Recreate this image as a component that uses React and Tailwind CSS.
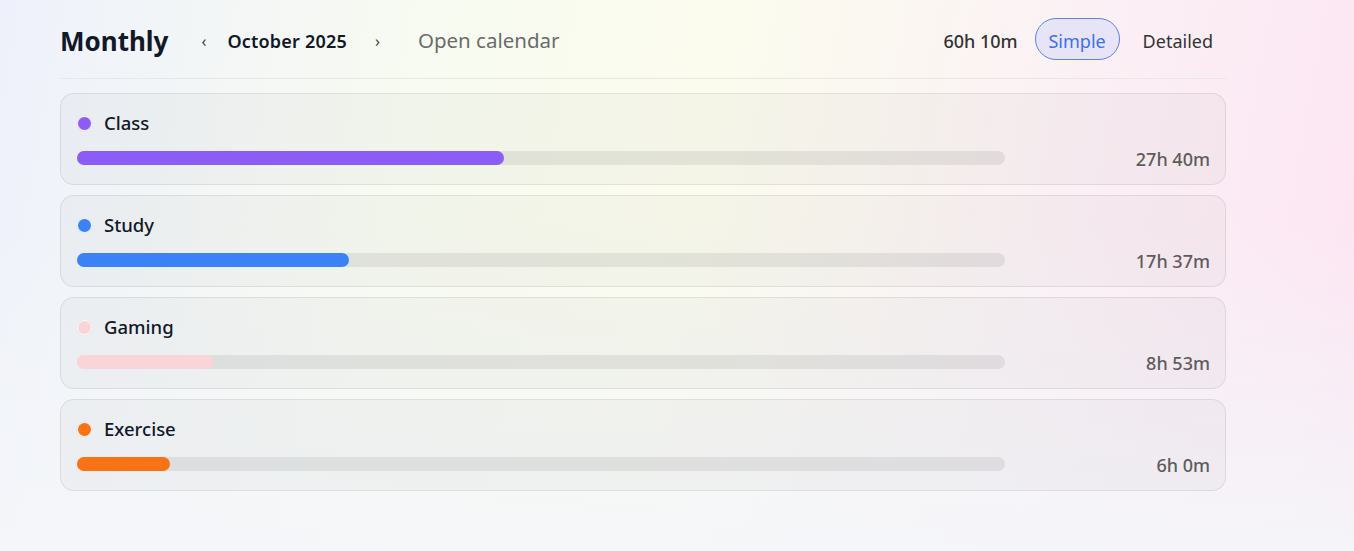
import React from "react";

const items = [
  { name: "Class", time: "27h 40m", mins: 1660, dot: "bg-[#8b5cf6]", bar: "bg-[#8b5cf6]" },
  { name: "Study", time: "17h 37m", mins: 1057, dot: "bg-[#3b82f6]", bar: "bg-[#3b82f6]" },
  { name: "Gaming", time: "8h 53m", mins: 533, dot: "bg-[#f9d4d8]", bar: "bg-[#f9d4d8]" },
  { name: "Exercise", time: "6h 0m", mins: 360, dot: "bg-[#f97316]", bar: "bg-[#f97316]" },
];
const total = 3610;

export default function App() {
  return (
    <div
      className="relative min-h-screen w-full overflow-hidden bg-[linear-gradient(100deg,#eef1fb_0%,#f8fbf1_30%,#fbfcee_50%,#fbf1f5_75%,#fce4f2_100%)]"
      style={{ fontFamily: '"Noto Sans", "Open Sans", sans-serif' }}
    >
      <div className="pointer-events-none absolute inset-0 bg-[linear-gradient(180deg,rgba(255,255,255,0)_0%,rgba(255,255,255,0)_40%,rgba(244,246,250,0.9)_100%)]" />
      <div className="relative w-[1166px] ml-[60px] pt-[18px]">
        <div className="flex items-center h-[42px]">
          <h1 className="pt-[3px] text-[26px] font-bold text-[#111827] leading-none">Monthly</h1>
          <button className="ml-[33px] pt-[3px] text-[16px] text-[#374151] leading-none">‹</button>
          <span className="ml-[21px] pt-[3px] text-[18px] font-semibold text-[#111827] leading-none tracking-[0.2px]">October 2025</span>
          <button className="ml-[28px] pt-[3px] text-[16px] text-[#374151] leading-none">›</button>
          <span className="ml-[38px] pt-[3px] text-[20.5px] text-[#6b6b6b] leading-none">Open calendar</span>
          <div className="ml-auto flex items-center">
            <span className="pt-[3px] text-[18px] font-medium text-[#333] leading-none">60h 10m</span>
            <button className="ml-[17px] pt-[3px] h-[42px] w-[85px] rounded-full border border-[#5b82ee] bg-[#e8e4f7] text-[18px] text-[#3b6ff0] leading-none">Simple</button>
            <span className="ml-[23px] mr-[13px] pt-[3px] text-[18px] text-[#333] leading-none">Detailed</span>
          </div>
        </div>
        <div className="mt-[18px] border-t border-[#e7e7e4]" />
        <div className="mt-[14px] flex flex-col gap-[10px]">
          {items.map((it) => (
            <div
              key={it.name}
              className="h-[92px] rounded-[14px] border border-[rgba(0,0,0,0.08)] bg-[rgba(120,120,120,0.05)] pl-[16px] pr-[15px] pt-[18px]"
            >
              <div className="flex items-center h-[22px]">
                <span className={`h-[15px] w-[15px] rounded-full border-[1.5px] border-white shadow-[0_0_0_0.5px_rgba(0,0,0,0.04)] ${it.dot}`} />
                <span className="ml-[12px] text-[18.5px] font-medium text-[#111827] leading-none">{it.name}</span>
              </div>
              <div className="mt-[14px] flex items-center">
                <div className="h-[14px] w-[928px] rounded-full bg-[rgba(0,0,0,0.07)]">
                  <div
                    className={`h-full rounded-full ${it.bar}`}
                    style={{ width: `${(it.mins / total) * 100}%` }}
                  />
                </div>
                <span className="ml-auto mt-[2px] text-[18px] font-medium text-[#5c5c5c] leading-none">{it.time}</span>
              </div>
            </div>
          ))}
        </div>
      </div>
    </div>
  );
}
